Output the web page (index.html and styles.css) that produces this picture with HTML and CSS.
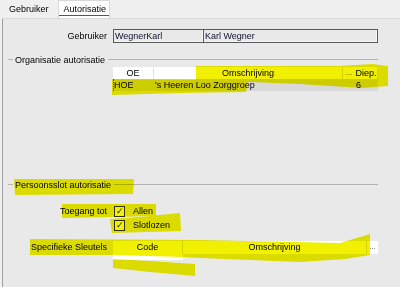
FILE: index.html
```html
<!DOCTYPE html>
<html lang="nl">
<head>
  <meta charset="UTF-8"/>
  <title>Autorisatie</title>
  <link rel="stylesheet" href="styles.css">
</head>
<body>
  <div class="window">
    <div class="tabs">
      <div class="tab">Gebruiker</div>
      <div class="tab active">Autorisatie</div>
    </div>

    <div class="panel">
      <div class="row user-row">
        <div class="label">Gebruiker</div>
        <div class="inputs">
          <div class="input login">WegnerKarl</div>
          <div class="input fullname">Karl Wegner</div>
        </div>
      </div>

      <div class="group"><span>Organisatie autorisatie</span></div>

      <div class="row">
        <div class="label"></div>
        <div class="grid org-grid">
          <div class="th">OE</div>
          <div class="th">Omschrijving</div>
          <div class="th dots">...</div>
          <div class="th">Diep.</div>
          <div class="td first">HOE</div>
          <div class="td">'s Heeren Loo Zorggroep</div>
          <div class="td"></div>
          <div class="td">6</div>
        </div>
      </div>

      <div class="group slot-group"><span>Persoonsslot autorisatie</span></div>

      <div class="row check-row">
        <div class="label">Toegang tot</div>
        <label class="check"><span class="box">&#10003;</span>Allen</label>
      </div>
      <div class="row check-row">
        <div class="label"></div>
        <label class="check"><span class="box">&#10003;</span>Slotlozen</label>
      </div>

      <div class="row keys-row">
        <div class="label">Specifieke Sleutels</div>
        <div class="grid key-grid">
          <div class="th">Code</div>
          <div class="th">Omschrijving</div>
          <div class="th dots">...</div>
          <div class="tb"></div>
        </div>
      </div>
    </div>

    <!-- highlighter marks drawn over the screenshot -->
    <svg class="marker" width="400" height="287" viewBox="0 0 400 287">
      <polygon points="196,66 340,66 372,64 388,66 388,86 362,88 300,84 250,82 196,81"/>
      <polygon points="112,79 248,80 246,92 180,93 112,95"/>
      <polygon points="14,179 134,179 133,194 15,195"/>
      <polygon points="62,204 156,204 156,216 62,218"/>
      <polygon points="110,219 140,217 180,213 181,231 112,233"/>
      <polygon points="30,239 200,240 340,243 370,234 370,255 345,259 300,262 200,258 183,257 113,255 30,255"/>
      <polygon points="113,259 150,261 195,264 195,276 150,272 113,268"/>
    </svg>
  </div>
</body>
</html>
```

FILE: styles.css
```css
body {
  margin: 0;
  font-family: 'Liberation Sans', Arial, sans-serif;
  font-size: 9px;
  color: #000;
  background: #f0f0f0;
}

.window {
  position: relative;
  width: 400px;
  height: 287px;
  overflow: hidden;
}

.tabs {
  display: flex;
  height: 18px;
  padding-left: 3px;
  background: #f0f0f0;
}

.tab {
  display: flex;
  align-items: center;
  padding: 0 6px 1px;
  height: 18px;
  box-sizing: border-box;
}

.tab.active {
  margin-left: 3px;
  padding: 0 3px 1px 5px;
  background: #fff;
  border: 1px solid #d9d9d9;
  border-bottom: none;
  box-shadow: inset 0 -2px 0 #fff, inset 0 -3px 0 #d6164d;
}

.panel {
  background: #e9e9e9;
  border-left: 1px solid #a0a0a0;
  border-top: 1px solid #d9d9d9;
  margin-left: 2px;
  height: 268px;
  padding: 10px 22px 0 5px;
}

.row {
  display: grid;
  grid-template-columns: 99px 265px;
  column-gap: 6px;
  align-items: center;
}

.label {
  text-align: right;
  white-space: nowrap;
}

.inputs {
  display: flex;
  height: 14px;
}

.input {
  box-sizing: border-box;
  height: 14px;
  padding: 0 1px;
  line-height: 12px;
  border: 1px solid #5a5a5a;
  box-shadow: inset -1px -1px 0 #f7f7f7;
  color: #101030;
}

.input.login {
  width: 91px;
}

.input.fullname {
  flex: 1;
  border-left: none;
}

.group {
  display: flex;
  align-items: center;
  height: 11px;
  margin: 11px 0 2px;
}

.group::before,
.group::after {
  content: "";
  height: 1px;
  background: #b4b4b4;
}

.group::before {
  width: 5px;
  margin-right: 2px;
}

.group::after {
  flex: 1;
  margin-left: 3px;
}

.slot-group {
  margin: 88px 0 14px;
}

.grid {
  display: grid;
  align-self: start;
}

.org-grid {
  grid-template-columns: 41px 189px 12px 23px;
  grid-auto-rows: 12px;
}

.key-grid {
  grid-template-columns: 70px 184px 11px;
  grid-template-rows: 13px 6px;
}

.th {
  background: #fff;
  border-right: 1px solid #e2e2e2;
  text-align: center;
  line-height: 12px;
  white-space: nowrap;
  overflow: hidden;
}

.th:nth-child(3) {
  border-right: none;
}

.th.dots {
  font-size: 8px;
  color: #5a4a6a;
}

.td {
  background: #d9d9d9;
  line-height: 12px;
  padding-left: 1px;
  white-space: nowrap;
}

.td.first {
  border-left: 1px dotted #555;
  padding-left: 0;
}

.tb {
  background: #fff;
}

.check-row {
  height: 14px;
}

.check {
  display: flex;
  align-items: center;
  gap: 8px;
  margin-left: 1px;
}

.box {
  box-sizing: border-box;
  width: 11px;
  height: 11px;
  border: 1px solid #333;
  background: #fff;
  font-size: 9px;
  line-height: 9px;
  text-align: center;
  color: #222;
}

.keys-row {
  margin-top: 9px;
  align-items: start;
}

.keys-row .label {
  line-height: 13px;
}

.marker {
  position: absolute;
  top: 0;
  left: 0;
  pointer-events: none;
  mix-blend-mode: multiply;
  fill: #f0f000;
}
```
